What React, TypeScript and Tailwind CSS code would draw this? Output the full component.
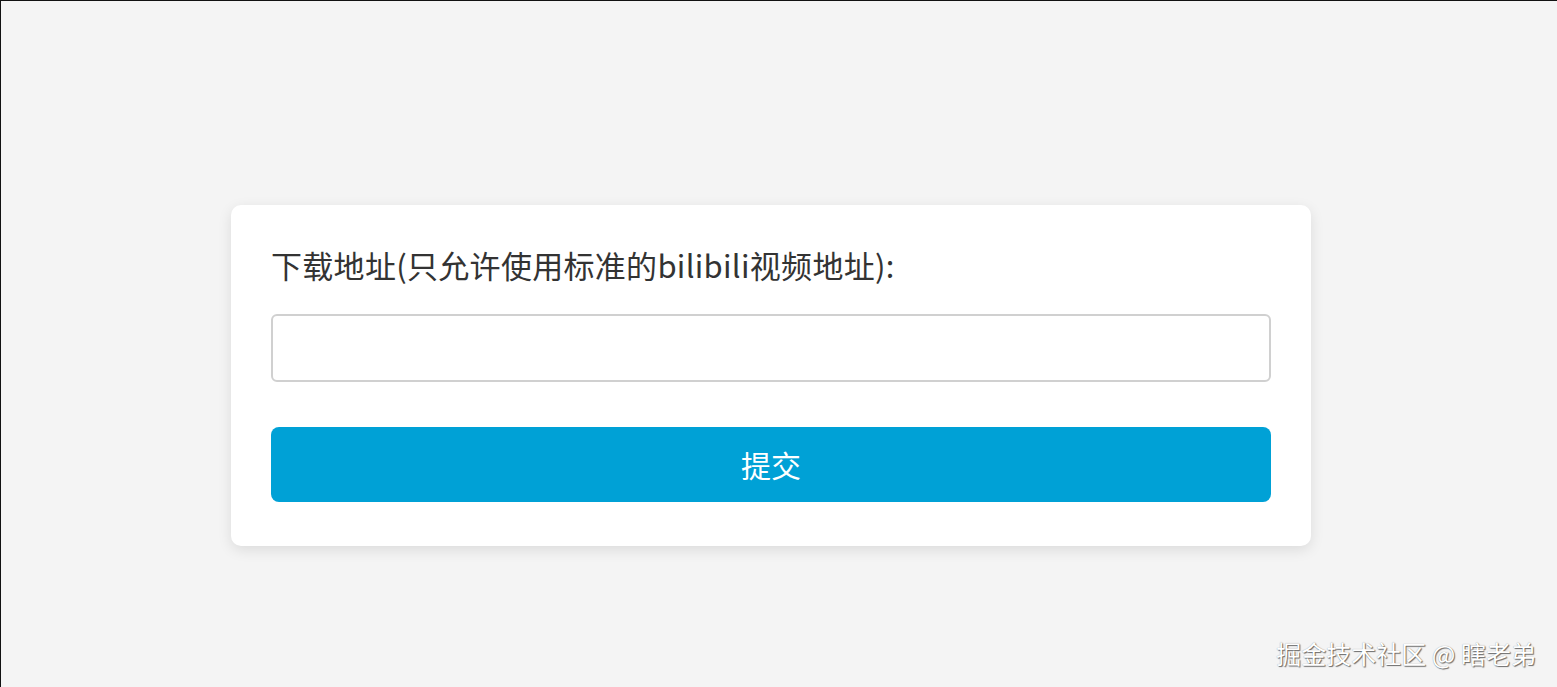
export default function App() {
  return (
    <div
      className="relative min-h-[687px] w-full bg-[#f4f4f4] border-t border-l border-[#111] pt-[204px] pl-[230px]"
      style={{ fontFamily: '"Noto Sans CJK SC", "Noto Sans", sans-serif' }}
    >
      <div className="w-[1080px] rounded-[10px] bg-white px-10 pt-10 pb-[44px] shadow-[0_4px_14px_rgba(0,0,0,0.10)]">
        <label className="block text-[31px] leading-[40px] tracking-[0.3px] text-[#333]">
          下载地址(只允许使用标准的bilibili视频地址):
        </label>
        <input
          type="text"
          className="mt-[29px] block h-[68px] w-full rounded-[6px] border-2 border-[#d0d0d0] bg-white px-3 text-[24px] outline-none"
        />
        <button className="mt-[45px] flex h-[75px] w-full items-center justify-center rounded-[8px] bg-[#00a1d6] text-[30px] text-white">
          提交
        </button>
      </div>
      <div className="absolute right-[21px] bottom-[19px] text-[25px] leading-[30px] text-white [text-shadow:1px_1px_1px_rgba(0,0,0,0.55),0_0_1px_rgba(0,0,0,0.4)]">
        掘金技术社区 @ 瞎老弟
      </div>
    </div>
  );
}
